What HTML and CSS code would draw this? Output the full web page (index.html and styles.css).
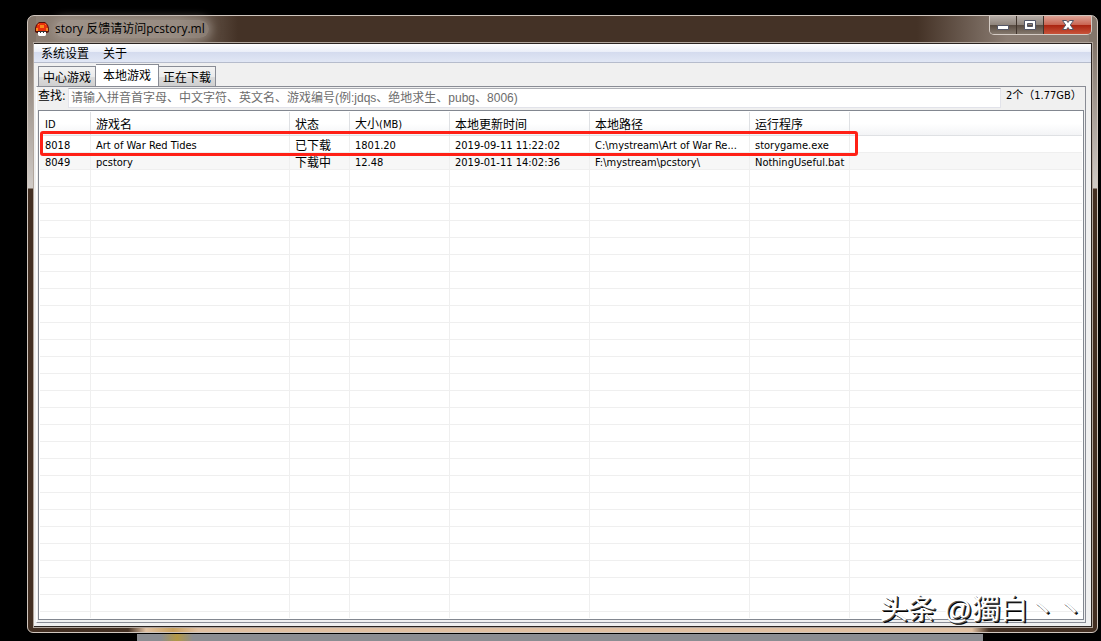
FILE: index.html
```html
<!DOCTYPE html>
<html lang="zh-CN">
<head>
<meta charset="utf-8">
<title>story 反馈请访问pcstory.ml</title>
<link rel="stylesheet" href="styles.css">
</head>
<body>
<main class="window">
  <header class="titlebar">
    <svg class="app-icon" viewBox="0 0 14 14" aria-hidden="true">
      <path d="M4 0h6l3 3 1 3v4l-2 1H2l-2-1V6l1-3z" fill="#5a1008"/>
      <path d="M4 1h6l2 2 1 4v2H1V7l1-4z" fill="#e8300c"/>
      <path d="M5 3h4v3H5zM1 6h2v3H1zM11 6h2v3h-2zM3 2h1v1H3zM10 2h1v1h-1z" fill="#f98a1c"/>
      <path d="M3 9h8v4l-1 1H4l-1-1z" fill="#fff"/>
      <path d="M3 9h8v1H3zM5 10h1v1H5zM8 10h1v1H8z" fill="#333"/>
    </svg>
    <h1 class="title">story 反馈请访问pcstory.ml</h1>
    <div class="controls">
      <button class="control" type="button" aria-label="最小化"><svg width="14" height="12" viewBox="0 0 14 12"><path d="M1.500 6.500h11v4h-11z" fill="#fff" stroke="#535666"/></svg></button>
      <button class="control" type="button" aria-label="最大化"><svg width="14" height="12" viewBox="0 0 14 12"><path fill-rule="evenodd" d="M1.500 1.500h11v9h-11zM4.500 4.500h5v3h-5z" fill="#fff" stroke="#535666"/></svg></button>
      <button class="control control-close" type="button" aria-label="关闭"><svg width="14" height="12" viewBox="0 0 14 12"><path d="M1.500 1.500h4L7 3.500l1.500-2h4L9.300 6l3.200 4.500h-4L7 8.500l-1.500 2h-4L4.700 6z" fill="#fff" stroke="#535666"/></svg></button>
    </div>
  </header>
  <div class="client">
    <nav class="menubar">
      <button class="menu" type="button">系统设置</button>
      <button class="menu" type="button">关于</button>
    </nav>
    <div class="tabs" role="tablist">
      <button class="tab" role="tab" type="button">中心游戏</button>
      <button class="tab tab-active" role="tab" type="button" aria-selected="true">本地游戏</button>
      <button class="tab" role="tab" type="button">正在下载</button>
    </div>
    <section class="panel">
      <div class="search">
        <label class="search-label" for="query">查找:</label>
        <input class="search-input" id="query" type="text" placeholder="请输入拼音首字母、中文字符、英文名、游戏编号(例:jdqs、绝地求生、pubg、8006)">
        <output class="summary">2个（1.77GB）</output>
      </div>
      <div class="list">
        <table class="games">
          <colgroup>
            <col class="col-id"><col class="col-name"><col class="col-state"><col class="col-size"><col class="col-time"><col class="col-path"><col class="col-run"><col>
          </colgroup>
          <thead>
            <tr><th class="latin">ID</th><th>游戏名</th><th>状态</th><th>大小<span class="latin">(MB)</span></th><th>本地更新时间</th><th>本地路径</th><th>运行程序</th><th></th></tr>
          </thead>
          <tbody>
            <tr><td>8018</td><td>Art of War Red Tides</td><td class="cjk">已下载</td><td>1801.20</td><td>2019-09-11 11:22:02</td><td>C:\mystream\Art of War Re...</td><td>storygame.exe</td><td></td></tr>
            <tr class="alt"><td>8049</td><td>pcstory</td><td class="cjk">下载中</td><td>12.48</td><td>2019-01-11 14:02:36</td><td>F:\mystream\pcstory\</td><td>NothingUseful.bat</td><td></td></tr>
            <tr class="filler"><td></td><td></td><td></td><td></td><td></td><td></td><td></td><td></td></tr>
          </tbody>
        </table>
        <div class="marker"></div>
      </div>
    </section>
  </div>
  <p class="watermark">头条 @獨白丶丶</p>
</main>
<div class="behind"></div>
</body>
</html>
```
FILE: styles.css
```css
* { box-sizing: border-box; }
body {
  margin: 0;
  height: 100vh;
  padding: 15px 3px 0 27px;
  display: flex;
  flex-direction: column;
  overflow: hidden;
  background: #000;
  color: #000;
  font: 12px/16px "DejaVu Sans Condensed", "Noto Sans CJK SC", sans-serif;
}
button, input { font: inherit; color: inherit; margin: 0; }
.window {
  position: relative;
  flex: 1;
  min-height: 0;
  display: flex;
  flex-direction: column;
  padding: 0 5px 5px 6px;
  border: 1px solid #cfc5bd;
  border-radius: 7px 7px 6px 6px;
  background:
    linear-gradient(90deg, #432f22 0 100px, #e0c0a2 118px, #c9a15e 145px, #e0c0a2 170px, #e0c0a2 calc(100% - 125px), #432f22 calc(100% - 108px)) bottom / 100% 6px no-repeat,
    linear-gradient(#83766b 28px, #d0cbc7 172px, #432f22 173px) left / 8px 100% no-repeat,
    linear-gradient(#83766b 28px, #d0cbc7 172px, #432f22 173px) right / 8px 100% no-repeat,
    linear-gradient(90deg, #8d8075, #7d6f63 150px, #443226 210px, #443226 calc(100% - 180px), #8a7c72 calc(100% - 90px));
}
.titlebar { display: flex; align-items: flex-start; height: 27px; padding-left: 1px; }
.app-icon { width: 14px; height: 14px; margin: 6px 6px 0 0; }
.title {
  margin: 4px 0 0;
  padding: 0 4px 0 0;
  font: 12px/18px "Open Sans", "Noto Sans CJK SC", sans-serif;
  border-radius: 9px;
  background: rgba(178, 168, 160, .5);
  box-shadow: 0 0 8px 3px rgba(178, 168, 160, .5);
}
.controls { display: flex; margin-left: auto; border: 1px solid #d5ccc5; border-top: 0; border-radius: 0 0 5px 5px; overflow: hidden; }
.control {
  display: grid;
  place-items: center;
  width: 27px;
  height: 18px;
  padding: 0;
  border: 0;
  border-right: 1px solid #40342c;
  background: linear-gradient(#b4aca6, #8e837b 50%, #574a40 50%, #85796e);
}
.control-close { width: 47px; border-right: 0; background: linear-gradient(#dda295, #c96350 50%, #a92310 50%, #c8543a); }
.client {
  flex: 1;
  min-height: 0;
  display: flex;
  flex-direction: column;
  border: 1px solid #2b2421;
  border-left-width: 0;
  box-shadow: 0 0 0 1px #b1a69d;
  background: #f0f0f0;
}
.menubar { display: flex; gap: 14px; height: 19px; padding-left: 7px; border-bottom: 1px solid #b6bccc; background: linear-gradient(#fff, #eaeef8 45%, #d4dbee 45%, #e1e7f5); }
.menu { padding: 2px 0 0; border: 0; background: none; line-height: 17px; }
.tabs { display: flex; align-items: flex-end; height: 23px; padding-left: 4px; }
.tab {
  height: 20px;
  padding: 2px 4px 0;
  border: 1px solid #898c95;
  border-bottom: 0;
  background: linear-gradient(#f3f3f3, #ebebeb 50%, #dddddd 50%, #cfcfcf);
  line-height: 19px;
}
.tab + .tab { border-left: 0; }
.tab-active { height: 22px; padding: 1px 7px 0; background: #fff; border-right: 1px solid #898c95; }
.panel {
  flex: 1;
  min-height: 0;
  display: flex;
  flex-direction: column;
  margin: 0 5px 3px 2px;
  padding: 0 1px 2px;
  border: 1px solid #898c95;
  border-left-color: #fff;
}
.search { display: flex; align-items: flex-start; height: 23px; padding-top: 1px; }
.search-label { width: 30px; }
.search-input { flex: 1; min-width: 0; height: 20px; padding: 0 2px; border: 1px solid #e2e3ea; border-top-color: #abadb3; background: #fff; font-family: "Liberation Sans", "Noto Sans CJK SC", sans-serif; }
.search-input::placeholder { color: #6d6d6d; opacity: 1; }
.summary { width: 83px; padding-left: 5px; white-space: nowrap; font-size: 11px; }
.list { position: relative; flex: 1; min-height: 0; border: 1px solid #828790; background: #fff; padding: 1px; }
.games { width: 100%; height: 100%; table-layout: fixed; border-collapse: separate; border-spacing: 0; }
.col-id { width: 51px; }
.col-name { width: 199px; }
.col-state { width: 60px; }
.col-size, .col-run { width: 100px; }
.col-time { width: 140px; }
.col-path { width: 160px; }
th, td { padding: 0 0 0 5px; text-align: left; font-weight: 400; white-space: nowrap; overflow: hidden; border-right: 1px solid #efefef; border-bottom: 1px solid #efefef; }
th { height: 24px; padding-top: 2px; border-color: #dfe1e4; background: linear-gradient(#fff 50%, #f3f4f6); }
td { height: 17px; padding-top: 4px; font-size: 11px; line-height: 12px; }
th:last-child, td:last-child { border-right: 0; }
.latin { font-size: 11px; }
.cjk { font-size: 12px; }
.alt { background: #f7f7f7; }
.filler td { height: auto; padding: 0; border-bottom: 0; background: repeating-linear-gradient(#fff 0 16px, #efefef 16px 17px); }
.marker { position: absolute; left: 1px; top: 20px; width: 818px; height: 25px; border: 3px solid #ff2016; border-radius: 3px; }
.watermark { position: absolute; right: 13px; bottom: 4px; margin: 0; color: #fff; font: 28px/36px "Liberation Sans", "Noto Sans CJK SC", sans-serif; text-shadow: 1px 1px 0 #555, 2px 2px 0 #000; }
.behind { height: 8px; margin: 0 113px 0 108px; border: solid #000; border-width: 1px 2px 0; background: linear-gradient(90deg, #8b8d92 24px, #b39845 40px, #8b8d92 56px); }
```
